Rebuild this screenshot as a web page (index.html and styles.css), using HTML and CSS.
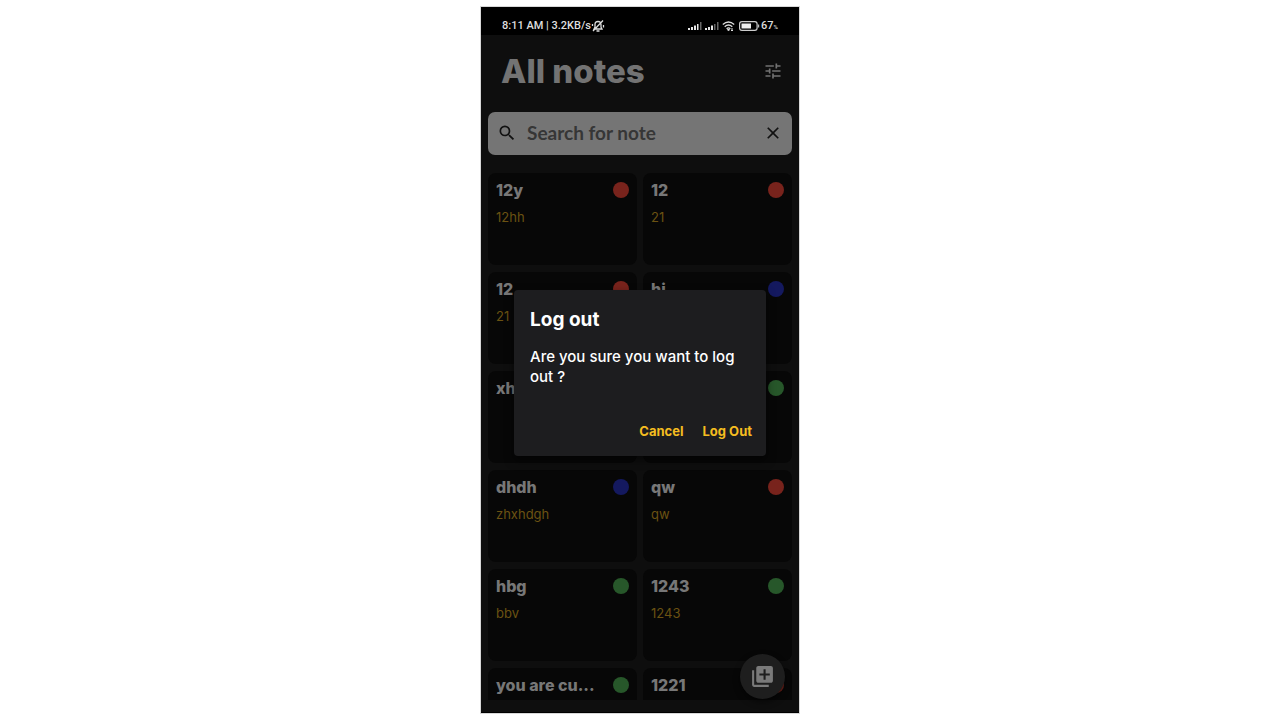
FILE: index.html
```html
<!DOCTYPE html>
<html lang="en">
<head>
<meta charset="utf-8">
<meta name="viewport" content="width=device-width, initial-scale=1">
<title>All notes</title>
<link rel="stylesheet" href="styles.css">
</head>
<body>
<div class="phone">
  <div class="status">
    <span class="status-text">8:11 AM | 3.2KB/s</span>
    <svg class="bell" viewBox="0 0 14 14" width="14" height="14" fill="none" stroke="#ddd" stroke-width="1.300"><path d="M3 10h8L10 8V5.500C10 3.500 9 2.500 7 2.500S4 3.500 4 5.500V8zM5.500 12h3M12 1.500L2 12M1.500 5v2M12.500 6v2.500"/></svg>
    <span class="spacer"></span>
    <svg class="signal" viewBox="0 0 14 10" width="14" height="10"><path fill="#e6e6e6" d="M0 7h2v2H0zM3 6h2v3H3zM6 4.500h2V9H6zM9 3h1.500v6H9z"/><path fill="#666" d="M12 1h1.500v8H12z"/></svg>
    <svg class="signal" viewBox="0 0 14 10" width="14" height="10"><path fill="#e6e6e6" d="M0 7h2v2H0zM3 6h2v3H3zM6 4.500h2V9H6z"/><path fill="#666" d="M9 3h1.500v6H9zM12 1h1.500v8H12z"/></svg>
    <svg class="wifi" viewBox="0 0 13 12" width="13" height="12" fill="none" stroke="#ddd" stroke-width="1.300"><path d="M.8 4.500Q6.500-.5 12.200 4.500M2.700 6.700q3.800-3.300 7.600 0M4.600 8.700q1.900-1.500 3.800 0"/><path d="M5.500 9.500h2L6.500 11zM10 8v3M9 10l1 1 1-1" stroke-width="1"/></svg>
    <svg class="battery" viewBox="0 0 21 10" width="21" height="10"><rect x=".6" y=".6" width="17.500" height="8.800" rx="2.300" fill="none" stroke="#ccc" stroke-width="1.200"/><path fill="#eee" d="M2.500 2.500h9.500v5H2.500z"/><path fill="#bbb" d="M19 3.500h1.200v3H19z"/></svg>
    <span class="status-text percent">67<small>%</small></span>
  </div>
  <main class="screen">
    <header class="top">
      <h1>All notes</h1>
      <button class="icon-btn" aria-label="Filter"><svg viewBox="0 0 24 24" width="20" height="20" fill="#727272"><path d="M3 17v2h6v-2H3zM3 5v2h10V5H3zm10 16v-2h8v-2h-8v-2h-2v6h2zM7 9v2H3v2h4v2h2V9H7zm14 4v-2H11v2h10zm-6-4h2V7h4V5h-4V3h-2v6z"/></svg></button>
    </header>
    <form class="search">
      <label for="q" aria-label="Search"><svg viewBox="0 0 24 24" width="20" height="20" fill="#111"><path d="M15.500 14h-.79l-.28-.27A6.471 6.471 0 0 0 16 9.500 6.500 6.500 0 1 0 9.500 16c1.610 0 3.090-.59 4.230-1.570l.27.28v.79l5 4.990L20.490 19l-4.990-5zm-6 0C7.010 14 5 11.990 5 9.500S7.010 5 9.500 5 14 7.010 14 9.500 11.990 14 9.500 14z"/></svg></label>
      <input id="q" type="text" placeholder="Search for note">
      <button type="button" class="icon-btn" aria-label="Clear"><svg viewBox="0 0 24 24" width="20" height="20" fill="#111"><path d="M19 6.410L17.590 5 12 10.590 6.410 5 5 6.410 10.590 12 5 17.590 6.410 19 12 13.410 17.590 19 19 17.590 13.410 12z"/></svg></button>
    </form>
    <section class="notes">
      <article class="note"><h2>12y</h2><i class="dot red"></i><p>12hh</p></article>
      <article class="note"><h2>12</h2><i class="dot red"></i><p>21</p></article>
      <article class="note"><h2>12</h2><i class="dot red"></i><p>21</p></article>
      <article class="note"><h2>hi</h2><i class="dot blue"></i></article>
      <article class="note"><h2>xh</h2><i class="dot green"></i></article>
      <article class="note"><h2></h2><i class="dot green"></i></article>
      <article class="note"><h2>dhdh</h2><i class="dot blue"></i><p>zhxhdgh</p></article>
      <article class="note"><h2>qw</h2><i class="dot red"></i><p>qw</p></article>
      <article class="note"><h2>hbg</h2><i class="dot green"></i><p>bbv</p></article>
      <article class="note"><h2>1243</h2><i class="dot green"></i><p>1243</p></article>
      <article class="note"><h2>you are cu...</h2><i class="dot green"></i></article>
      <article class="note"><h2>1221</h2><i class="dot red"></i></article>
    </section>
    <button class="fab" aria-label="Add note"><svg viewBox="0 0 24 24" width="25" height="25" fill="#7a7a7a"><path d="M4 6H2v14c0 1.100.9 2 2 2h14v-2H4V6zm16-4H8c-1.100 0-2 .9-2 2v12c0 1.100.9 2 2 2h12c1.100 0 2-.9 2-2V4c0-1.100-.9-2-2-2zm-1 9h-4v4h-2v-4H9V9h4V5h2v4h4v2z"/></svg></button>
    <div class="overlay">
      <div class="dialog" role="dialog" aria-labelledby="dialog-title">
        <h2 id="dialog-title">Log out</h2>
        <p>Are you sure you want to log out ?</p>
        <div class="actions"><button>Cancel</button><button>Log Out</button></div>
      </div>
    </div>
  </main>
</div>
</body>
</html>
```
FILE: styles.css
```css
* { box-sizing: border-box; }
body {
  margin: 0;
  min-height: 100vh;
  padding: 7px 0;
  background: #fff;
  display: flex;
  justify-content: center;
  font-family: Inter, Roboto, sans-serif;
}
h1, h2, p { margin: 0; }
button { border: 0; padding: 0; background: none; font: inherit; cursor: pointer; }
svg { display: block; flex: none; }
.phone {
  height: calc(100vh - 14px);
  aspect-ratio: 318 / 706;
  background: #0e0e0e;
  border-bottom: 1px solid #000;
  box-shadow: 0 0 0 1px #d8d8d8;
  display: flex;
  flex-direction: column;
  overflow: hidden;
}
.status {
  height: 28px;
  flex: none;
  padding: 9px 21px 0;
  background: #000;
  color: #dedede;
  display: flex;
  align-items: center;
  gap: 3px;
}
.status-text { font: 500 11px/14px Roboto, sans-serif; white-space: nowrap; }
.status-text small { font-size: 6px; line-height: 6px; }
.bell { margin-left: -3px; }
.battery { margin-left: 1px; }
.percent { margin-left: -2px; }
.spacer { flex: 1; }
.screen {
  position: relative;
  flex: 1;
  min-height: 0;
  padding: 0 7px 12px;
  display: flex;
  flex-direction: column;
}
.top {
  height: 77px;
  flex: none;
  padding: 0 9px 6px 13px;
  display: flex;
  align-items: center;
  justify-content: space-between;
}
.top h1 { font-size: 33px; line-height: 40px; font-weight: 800; color: #737373; }
.search {
  height: 43px;
  flex: none;
  padding: 0 9px 1px;
  background: #757575;
  border-radius: 7px;
  display: flex;
  align-items: center;
  gap: 10px;
}
.search input {
  flex: 1;
  min-width: 0;
  border: 0;
  padding: 0;
  background: none;
  outline: 0;
  color: #333;
  font: 700 19px/24px Lato, sans-serif;
}
.search input::placeholder { color: #363636; opacity: 1; }
.notes {
  flex: 1;
  min-height: 0;
  margin-top: 18px;
  overflow: hidden;
  display: grid;
  grid-template-columns: 1fr 1fr;
  grid-auto-rows: 92px;
  gap: 7px 6px;
}
.note {
  padding: 7px 8px;
  background: #070707;
  border-radius: 8px;
  display: grid;
  grid-template-columns: 1fr 16px;
  align-content: start;
  align-items: center;
  row-gap: 8px;
}
.note h2 { min-height: 20px; font-size: 16px; line-height: 20px; font-weight: 800; color: #777; white-space: nowrap; }
.note p { font-size: 13px; line-height: 18px; color: #6b5212; }
.dot { width: 16px; height: 16px; border-radius: 50%; }
.red { background: #78231c; }
.blue { background: #14195f; }
.green { background: #27572a; }
.fab {
  position: absolute;
  right: 14px;
  bottom: 13px;
  width: 45px;
  height: 45px;
  border-radius: 50%;
  background: #1e1e1e;
  box-shadow: 0 3px 6px #0008;
  display: grid;
  place-items: center;
}
.overlay {
  position: absolute;
  inset: 0;
  padding: 0 33px 1px;
  display: grid;
  align-items: center;
}
.dialog {
  padding: 19px 14px 15px 16px;
  background: #1d1d1f;
  border-radius: 4px;
  color: #fff;
  box-shadow: 0 4px 10px #0009;
}
.dialog h2 { font-size: 19px; line-height: 22px; font-weight: 700; }
.dialog p { margin-top: 16px; font-size: 15px; line-height: 20px; font-weight: 500; }
.actions { margin-top: 34px; display: flex; justify-content: flex-end; gap: 19px; }
.actions button { color: #f5bd20; font-size: 13px; line-height: 20px; font-weight: 700; }
```
